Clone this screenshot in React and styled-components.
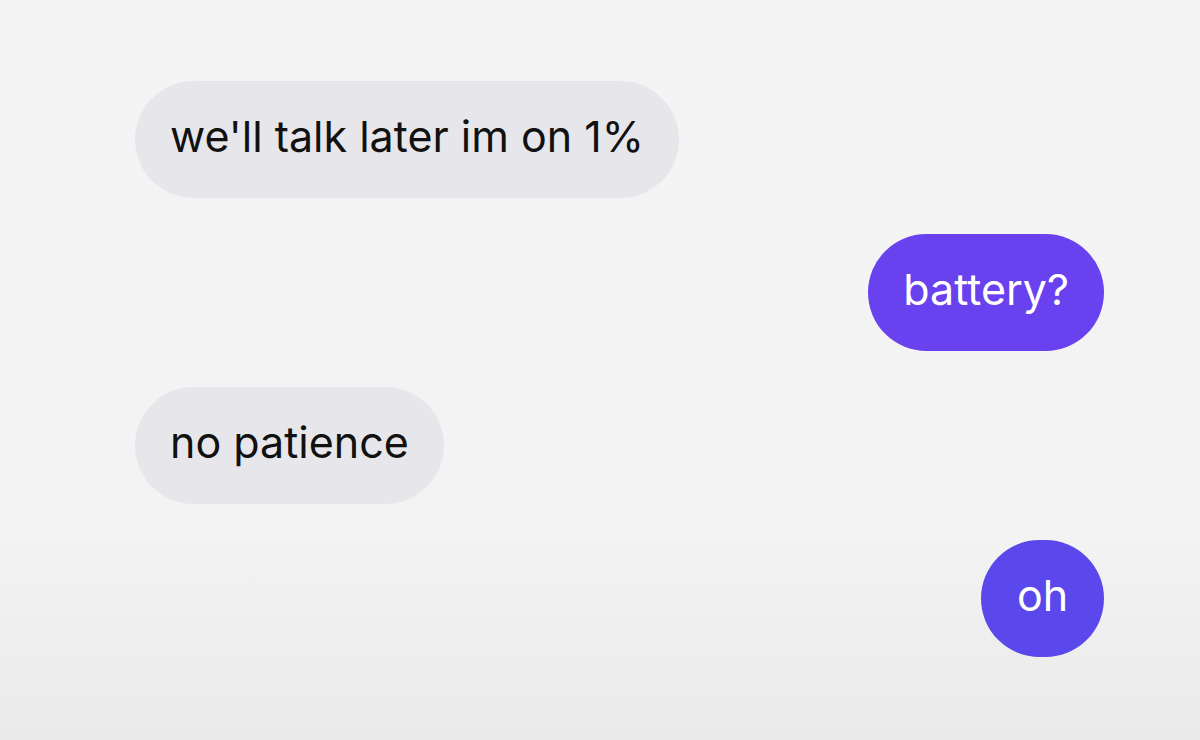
import React from 'react';
import styled, { createGlobalStyle } from 'styled-components';

const GlobalStyle = createGlobalStyle`
  html, body {
    margin: 0;
    padding: 0;
  }
  body {
    width: 1200px;
    height: 740px;
    overflow: hidden;
    font-family: Inter, "Noto Sans", sans-serif;
    background: linear-gradient(180deg, #f4f4f4 0%, #f3f3f3 72%, #eaeaea 100%);
  }
`;

const Thread = styled.div`
  display: flex;
  flex-direction: column;
  gap: 36px;
  padding: 81px 96px 0 135px;
`;

const Bubble = styled.div`
  align-self: ${(p) => (p.$mine ? 'flex-end' : 'flex-start')};
  box-sizing: border-box;
  height: 117px;
  min-width: 123px;
  padding: 0 35px 7px;
  border-radius: 59px;
  display: flex;
  align-items: center;
  justify-content: center;
  font-size: 43px;
  color: ${(p) => (p.$mine ? '#ffffff' : '#111111')};
  background: ${(p) => (p.$mine ? p.$tint : '#e7e7eb')};
`;

const messages = [
  { text: "we'll talk later im on 1%" },
  { text: 'battery?', mine: true, tint: '#6a41ef' },
  { text: 'no patience' },
  { text: 'oh', mine: true, tint: '#5a48ec' },
];

export default function App() {
  return (
    <>
      <GlobalStyle />
      <Thread>
        {messages.map((m, i) => (
          <Bubble key={i} $mine={m.mine} $tint={m.tint}>
            {m.text}
          </Bubble>
        ))}
      </Thread>
    </>
  );
}
